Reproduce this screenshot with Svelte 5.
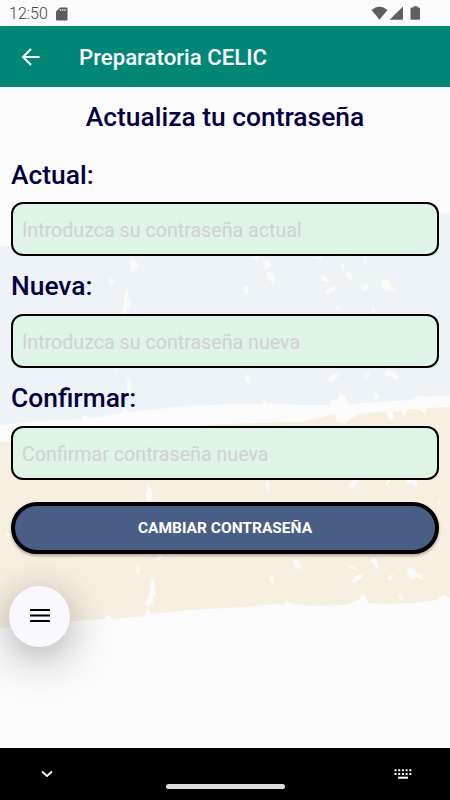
<script>
    let fields = [
        { id: "actual", label: "Actual:", hint: "Introduzca su contraseña actual", value: "" },
        { id: "nueva", label: "Nueva:", hint: "Introduzca su contraseña nueva", value: "" },
        { id: "confirmar", label: "Confirmar:", hint: "Confirmar contraseña nueva", value: "" },
    ];
</script>

<div class="screen">
    <div class="status">
        <span class="clock">12:50</span>
        <svg class="sd" width="12" height="14" viewBox="0 0 12 14">
            <path d="M4 0.5h6.5q1 0 1 1v11q0 1-1 1h-9.500q-1 0-1-1V4.500z" fill="#5d5d5d" />
            <path d="M4.500 2v2M6.800 2v2M9 2v2" stroke="#ddd" stroke-width="1.200" />
        </svg>
        <svg class="signals" width="50" height="16" viewBox="0 0 50 16">
            <g fill="#5f5f5f">
                <path d="M0.500 4Q8.500 -3 16.500 4L8.500 13.700z" />
                <path d="M18.500 13.700L32 0.500v13.200z" />
                <path d="M40.500 1.500h2V0.300h4V1.500H48q1 0 1 1v10.200q0 1-1 1h-7.500q-1 0-1-1V2.500q0-1 1-1z" />
            </g>
        </svg>
    </div>

    <header>
        <button class="back" aria-label="Atrás">
            <svg width="24" height="24" viewBox="0 0 24 24">
                <path d="M20.500 12H4.500M12 4L4 12l8 8" fill="none" stroke="#fff" stroke-width="2" />
            </svg>
        </button>
        <h1>Preparatoria CELIC</h1>
    </header>

    <main>
        <!-- painted stripes behind the form -->
        <svg class="backdrop" width="450" height="661" viewBox="0 87 450 661">
            <path
                fill="#eef3f8"
                d="M0 246L30 245 100 238 180 232 260 229 350 221 410 215 450 213V396L422 397 419 395 410 400 380 402 350 404 345 397 340 393 337 400 332 399 331 405 300 405 266 403 264 399 262 404 240 404 180 406 160 409 128 412 125 405 122 413 99 417 90 418 84 415 80 419 40 421 0 425z"
            />
            <path
                fill="#f7efe0"
                d="M0 442L50 440 150 430 225 424 260 423 300 422 320 418 335 414 337 422 345 424 350 419 360 414 385 411 390 420 394 419 393 412 401 411 404 418 407 410 414 409 421 410 425 415 427 408 450 407V598L443 595 437 600 415 603 385 604 368 603 365 596 362 594 360 599 356 601 345 605 310 606 290 603 286 600 285 605 275 604 245 607 190 610 151 614 148 608 145 616 115 619 107 615 104 619 75 621 0 628z"
            />
            <g fill="#fbfaf7">
                <path d="M131 258l7 5 1 3-8 7zM110 277l3 2 1 4-2 3-2-1zM125 292l3-1 1 8 2 5-5 7-3 0 1-9zM122 310l4 1 1 3-6-1z" />
                <path d="M113 369h4l-2 4zM127 380l3-2 2 6-2 10h-3zM250 257h10l-4 4zM265 259l5 4 1 2-4 4h-2zM266 273q5-3 9 3l-1 7q-6-2-8-10zM245 285l3 1v7l-3 1-2-4z" />
                <path d="M339 261l4 3 2 5-2 2zM312 257h11l-2 3-7-1zM347 270l5 4 1 6-5-1-3-4zM321 275l9 5-1 2-7-1zM325 292l6-5 6-2-2 5-7 4h-3zM334 309l5-4 1 1-3 4zM362 288l3-4 4 0-1 5-5 3zM363 257h3v7zM381 279l6 1 5 6 3 2 2 5-7-4-5 2-3-4zM371 305l3 3 1 5h-2z" />
                <path d="M246 373l4 6-2 3-3-1zM328 379l5-5 7-2-3 6-6 4zM364 375l6-4-1 6-3 3zM386 371l5-1 6 5 2 4-6-1-3-2-4 1-2-6zM374 395l2-3 4 6-3 2z" />
            </g>
            <g fill="#f8fafb">
                <path d="M148 485l3 3 2 10-2 3h-5l0-7zM157 554h7l-7 8zM137 564l3 4-1 6-3-1zM152 579l3 3 0 8 2 2-4 6v5l-6 3-3-1 5-8 1-10zM147 607l3 7-5 1z" />
                <path d="M267 480l3 3-1 6-2 1-2-4zM349 484l5-4h5l-6 8h-3zM385 483l3-3h3l-5 6zM405 480h11l2 6-3 1-4-4-4 1zM293 559l4 1 4 5-1 5-6-4zM273 574l1 9-3-1-2-4zM348 564l8 4 2 2-9-2zM352 580l6-5 5-2-1 5-8 4h-3zM371 558l5 1 3 10-4-2-4-6zM388 577l4-3 2 1-3 5-3 0zM407 568l7 1 4 5 3 1 2 5-6-3-6 3-3-6zM398 595l2-2 3 7-2 1zM437 501h4v2h-3zM5 533h7v2H6z" />
            </g>
        </svg>

        <form on:submit|preventDefault>
            <h2>Actualiza tu contraseña</h2>
            {#each fields as field}
                <div class="field">
                    <label for={field.id}>{field.label}</label>
                    <input id={field.id} type="password" placeholder={field.hint} bind:value={field.value} />
                </div>
            {/each}
            <button class="submit" type="submit">CAMBIAR CONTRASEÑA</button>
        </form>

        <button class="menu" aria-label="Menú">
            <svg width="20" height="14" viewBox="0 0 20 14">
                <path d="M0 1h20M0 6.500h20M0 12h20" stroke="#000" stroke-width="2" />
            </svg>
        </button>
    </main>

    <nav>
        <svg class="down" width="12" height="8" viewBox="0 0 12 8">
            <path d="M1 1.500l5 4.500 5-4.500" fill="none" stroke="#fff" stroke-width="1.700" />
        </svg>
        <div class="pill"></div>
        <svg class="keyboard" width="18" height="12" viewBox="0 0 18 12">
            <path d="M0.500 2.200h17M0.500 6h17" stroke="#fff" stroke-width="2" stroke-dasharray="2 1.700" />
            <path d="M4 9.700h10" stroke="#fff" stroke-width="2" />
        </svg>
    </nav>
</div>

<style>
    .screen {
        display: flex;
        flex-direction: column;
        width: 450px;
        height: 800px;
        overflow: hidden;
        background: #fbfbfb;
        font-family: Roboto, sans-serif;
    }

    button {
        padding: 0;
        border: none;
        font-family: inherit;
        cursor: pointer;
    }

    svg {
        display: block;
    }

    .status {
        display: flex;
        align-items: center;
        box-sizing: border-box;
        height: 26px;
        padding: 1px 29px 0 9px;
        color: #444;
        font-size: 16px;
    }

    .clock {
        width: 47px;
        font-weight: 300;
        line-height: 26px;
    }

    .signals {
        margin-left: auto;
    }

    header {
        display: flex;
        align-items: center;
        height: 61px;
        padding-left: 19px;
        background: #028678;
    }

    .back {
        width: 24px;
        height: 24px;
        margin-right: 36px;
        background: none;
    }

    h1 {
        margin: 0;
        color: #fff;
        font-size: 22.200px;
        font-weight: 500;
        line-height: 28px;
    }

    main {
        position: relative;
        height: 661px;
    }

    .backdrop {
        position: absolute;
        top: 0;
        left: 0;
    }

    form {
        position: relative;
        padding: 15px 11px 0;
    }

    h2,
    label {
        color: #02003f;
        font-size: 26.400px;
        font-weight: 500;
        line-height: 30px;
    }

    h2 {
        margin: 0 0 27.500px;
        text-align: center;
    }

    .field {
        height: 111.800px;
    }

    label {
        display: block;
        margin-bottom: 12.500px;
    }

    input {
        display: block;
        box-sizing: border-box;
        width: 100%;
        height: 54px;
        padding: 3px 9px 0;
        border: 2px solid #000;
        border-radius: 12px;
        outline: 0;
        background: #dff3e7;
        font-family: inherit;
        font-size: 19.650px;
    }

    input::placeholder {
        color: #d1d1d1;
        opacity: 1;
    }

    .submit {
        display: block;
        box-sizing: border-box;
        width: 100%;
        height: 52px;
        margin-top: 7px;
        padding-top: 1px;
        border: 4px solid #000;
        border-radius: 26px;
        background: #495e87;
        box-shadow: 0 2px 3px rgba(0, 0, 0, 0.3);
        color: #fff;
        font-size: 15.500px;
        font-weight: 700;
    }

    .menu {
        position: relative;
        display: flex;
        align-items: center;
        justify-content: center;
        width: 61px;
        height: 61px;
        margin: 32px 0 0 9px;
        border-radius: 50%;
        background: #f9f8ff;
        box-shadow: 0 10px 44px rgba(0, 0, 0, 0.34);
    }

    nav {
        display: flex;
        box-sizing: border-box;
        height: 52px;
        padding: 20px 38px 0 41px;
        background: #000;
    }

    .down {
        margin-top: 2px;
    }

    .pill {
        width: 119px;
        height: 5px;
        margin: 16px 0 0 113px;
        border-radius: 3px;
        background: #dcdcdc;
    }

    .keyboard {
        margin: 0 0 0 auto;
    }
</style>
